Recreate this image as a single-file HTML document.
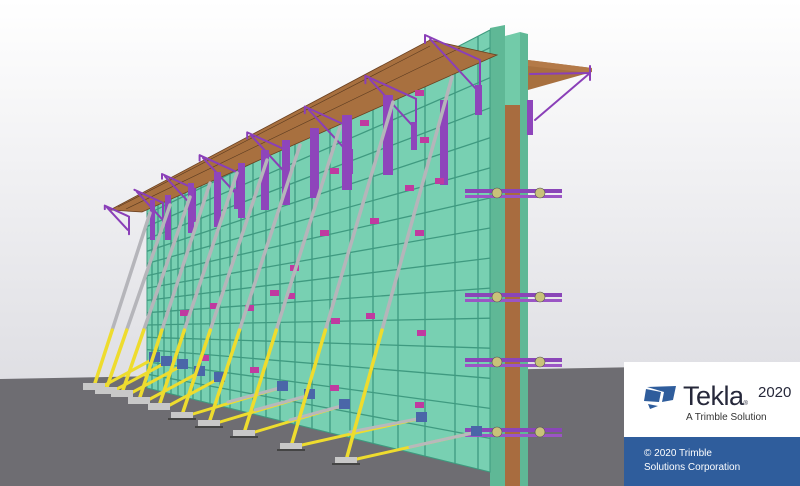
<!DOCTYPE html>
<html><head><meta charset="utf-8"><style>
body{margin:0;width:800px;height:486px;overflow:hidden;font-family:"Liberation Sans",sans-serif}
#c{position:absolute;left:0;top:0}
.box{position:absolute;left:624px;top:362px;width:176px;height:75px;background:#fff}
.blue{position:absolute;left:624px;top:437px;width:176px;height:49px;background:#2f5d9c;color:#fff;font-size:10px;line-height:14px;padding:10px 0 0 20px;box-sizing:border-box}
</style></head><body>
<svg id="c" width="800" height="486" viewBox="0 0 800 486">
<defs><linearGradient id="sky" x1="0" y1="0" x2="0" y2="1"><stop offset="0" stop-color="#ffffff"/><stop offset="1" stop-color="#d6d6dc"/></linearGradient></defs>
<rect width="800" height="486" fill="url(#sky)"/>
<polygon points="0,379 800,364 800,486 0,486" fill="#6e6d72"/>
<polygon points="505,36 520,32 520,486 505,486" fill="#72cba9"/>
<rect x="503" y="105" width="17" height="381" fill="#a86c3f"/>
<polygon points="520,32 528,34 528,486 520,486" fill="#5fb896"/>
<polygon points="490,28 505,25 505,486 490,486" fill="#5fb896"/>
<polygon points="147,207 490,30 490,472 147,388" fill="#78d0b2" stroke="#3d9a7e"/>
<g stroke="#3f9a80" stroke-width="1.3">
<line x1="478" y1="36.2" x2="478" y2="469"/><line x1="455" y1="48.1" x2="455" y2="463.5"/><line x1="425" y1="63.6" x2="425" y2="456.1"/><line x1="398" y1="77.5" x2="398" y2="449.5"/><line x1="373" y1="90.4" x2="373" y2="443.4"/><line x1="350" y1="102.2" x2="350" y2="437.7"/><line x1="330" y1="112.6" x2="330" y2="432.8"/><line x1="312" y1="121.9" x2="312" y2="428.4"/><line x1="295" y1="130.6" x2="295" y2="424.3"/><line x1="280" y1="138.4" x2="280" y2="420.6"/><line x1="266" y1="145.6" x2="266" y2="417.2"/><line x1="253" y1="152.3" x2="253" y2="414"/><line x1="241" y1="158.5" x2="241" y2="411"/><line x1="230" y1="164.2" x2="230" y2="408.3"/><line x1="220" y1="169.3" x2="220" y2="405.9"/><line x1="210" y1="174.5" x2="210" y2="403.4"/><line x1="201" y1="179.1" x2="201" y2="401.2"/><line x1="193" y1="183.3" x2="193" y2="399.3"/><line x1="185" y1="187.4" x2="185" y2="397.3"/><line x1="178" y1="191" x2="178" y2="395.6"/><line x1="171" y1="194.6" x2="171" y2="393.9"/><line x1="164" y1="198.2" x2="164" y2="392.2"/><line x1="158" y1="201.3" x2="158" y2="390.7"/><line x1="152" y1="204.4" x2="152" y2="389.2"/>
<line x1="147" y1="214.2" x2="490" y2="47.7"/><line x1="147" y1="226.5" x2="490" y2="77.7"/><line x1="147" y1="238.9" x2="490" y2="107.8"/><line x1="147" y1="251.2" x2="490" y2="137.8"/><line x1="147" y1="263.5" x2="490" y2="167.9"/><line x1="147" y1="275.8" x2="490" y2="198"/><line x1="147" y1="288.1" x2="490" y2="228"/><line x1="147" y1="300.4" x2="490" y2="258.1"/><line x1="147" y1="312.7" x2="490" y2="288.1"/><line x1="147" y1="325" x2="490" y2="318.2"/><line x1="147" y1="337.3" x2="490" y2="348.2"/><line x1="147" y1="349.6" x2="490" y2="378.3"/><line x1="147" y1="361.9" x2="490" y2="408.4"/><line x1="147" y1="374.2" x2="490" y2="438.4"/>
</g>
<polygon points="430,40 497,55 142,212 110,210" fill="#a8703f" stroke="#6a4020" stroke-width="0.8"/>
<line x1="430" y1="46" x2="118" y2="207" stroke="#5a3a20" stroke-width="0.6"/>
<line x1="460" y1="48" x2="126" y2="209" stroke="#5a3a20" stroke-width="0.6"/>
<polygon points="528,60 592,68 592,72 528,90" fill="#a8703f"/>
<polygon points="528,60 592,68 590,73 528,66" fill="#b47a48"/>
<g stroke="#8a3fb8" stroke-width="2" stroke-linecap="round" fill="none">
<path d="M425,35 L480,60 L480,100 M425,35 V43 M430,39 L477,90"/>
<path d="M365.4,75.8 L416,98.8 V135.6 M365.4,75.8 V83.2 M370,79.5 L413.2,126.4"/>
<path d="M304.8,106.6 L351,127.6 V161.2 M304.8,106.6 V113.3 M309,110 L348.5,152.8"/>
<path d="M247.2,132.4 L289,151.4 V181.8 M247.2,132.4 V138.5 M251,135.4 L286.7,174.2"/>
<path d="M199.6,155.2 L237,172.2 V199.4 M199.6,155.2 V160.6 M203,158 L235,192.6"/>
<path d="M162,174 L195,189 V213 M162,174 V178.8 M165,176.4 L193.2,207"/>
<path d="M134.4,189.8 L163,202.8 V223.6 M137,191.9 L161.4,218.4"/>
<path d="M104.8,205.6 L129,216.6 V234.2 M104.8,205.6 V209.1 M107,207.4 L127.7,229.8"/>
<path d="M530,74 L590,73 M590,73 L535,120 M590,66 V80"/>
</g>
<g fill="#8e45bb">
<rect x="475" y="85" width="7" height="30"/><rect x="411" y="122" width="6" height="28"/><rect x="347" y="149" width="6" height="25"/><rect x="285" y="170" width="5" height="23"/><rect x="234" y="189" width="5" height="20"/><rect x="192" y="204" width="4" height="18"/><rect x="527" y="100" width="6" height="35"/>
<rect x="440" y="100" width="8" height="85"/><rect x="383" y="95" width="10" height="80"/><rect x="342" y="115" width="10" height="75"/><rect x="310" y="128" width="9" height="70"/><rect x="282" y="140" width="8" height="65"/><rect x="261" y="150" width="8" height="60"/><rect x="238" y="163" width="7" height="55"/><rect x="214" y="172" width="7" height="55"/><rect x="188" y="183" width="6" height="50"/><rect x="165" y="195" width="6" height="45"/><rect x="150" y="200" width="5" height="40"/>
</g>
<g fill="#c03aa0">
<rect x="415" y="90" width="9" height="6"/><rect x="420" y="137" width="9" height="6"/><rect x="435" y="178" width="9" height="6"/><rect x="405" y="185" width="9" height="6"/><rect x="360" y="120" width="9" height="6"/><rect x="330" y="168" width="9" height="6"/><rect x="370" y="218" width="9" height="6"/><rect x="320" y="230" width="9" height="6"/><rect x="290" y="265" width="9" height="6"/><rect x="270" y="290" width="9" height="6"/><rect x="415" y="230" width="9" height="6"/><rect x="417" y="330" width="9" height="6"/><rect x="366" y="313" width="9" height="6"/><rect x="331" y="318" width="9" height="6"/><rect x="286" y="293" width="9" height="6"/><rect x="245" y="305" width="9" height="6"/><rect x="210" y="303" width="9" height="6"/><rect x="180" y="310" width="9" height="6"/><rect x="415" y="402" width="9" height="6"/><rect x="330" y="385" width="9" height="6"/><rect x="250" y="367" width="9" height="6"/><rect x="200" y="355" width="9" height="6"/>
</g>
<g>
<rect x="465" y="189" width="97" height="4" fill="#8a45b8"/><rect x="465" y="195" width="97" height="3" fill="#9b55c5"/>
<rect x="465" y="293" width="97" height="4" fill="#8a45b8"/><rect x="465" y="299" width="97" height="3" fill="#9b55c5"/>
<rect x="465" y="358" width="97" height="4" fill="#8a45b8"/><rect x="465" y="364" width="97" height="3" fill="#9b55c5"/>
<rect x="465" y="428" width="97" height="4" fill="#8a45b8"/><rect x="465" y="434" width="97" height="3" fill="#9b55c5"/>
<g fill="#c9c27a" stroke="#555" stroke-width=".6">
<circle cx="497" cy="193" r="5"/><circle cx="540" cy="193" r="5"/><circle cx="497" cy="297" r="5"/><circle cx="540" cy="297" r="5"/><circle cx="497" cy="362" r="5"/><circle cx="540" cy="362" r="5"/><circle cx="497" cy="432" r="5"/><circle cx="540" cy="432" r="5"/>
</g></g>
<g stroke-width="3" stroke-linecap="round">
<g stroke="#eedc2e">
<line x1="357" y1="459" x2="477" y2="432"/><line x1="302" y1="445" x2="422" y2="418"/><line x1="255" y1="432" x2="345" y2="405"/><line x1="220" y1="422" x2="310" y2="395"/><line x1="193" y1="414" x2="283" y2="387"/><line x1="170" y1="405" x2="220" y2="378"/><line x1="150" y1="399" x2="200" y2="372"/><line x1="133" y1="392" x2="183" y2="365"/><line x1="117" y1="389" x2="167" y2="362"/><line x1="105" y1="385" x2="155" y2="358"/>
</g>
<g stroke="#b8b8bc">
<line x1="410" y1="447" x2="477" y2="432"/><line x1="350" y1="432" x2="422" y2="418"/><line x1="290" y1="420" x2="345" y2="405"/><line x1="255" y1="410" x2="310" y2="395"/><line x1="228" y1="402" x2="283" y2="387"/>
</g></g>
<g fill="#4a66a8">
<rect x="471" y="426" width="11" height="10"/><rect x="416" y="412" width="11" height="10"/><rect x="339" y="399" width="11" height="10"/><rect x="304" y="389" width="11" height="10"/><rect x="277" y="381" width="11" height="10"/><rect x="214" y="372" width="11" height="10"/><rect x="194" y="366" width="11" height="10"/><rect x="177" y="359" width="11" height="10"/><rect x="161" y="356" width="11" height="10"/><rect x="149" y="352" width="11" height="10"/>
</g>
<g stroke-width="3.5" stroke-linecap="round">
<g stroke="#b5b5ba">
<line x1="452" y1="77" x2="382" y2="330"/><line x1="393" y1="102" x2="325.4" y2="330"/><line x1="340" y1="127" x2="276.3" y2="330"/><line x1="300" y1="145" x2="239.5" y2="330"/><line x1="267" y1="160" x2="210.3" y2="330"/><line x1="237" y1="173" x2="184.4" y2="330"/><line x1="210" y1="183" x2="161.9" y2="330"/><line x1="190" y1="197" x2="143.8" y2="330"/><line x1="170" y1="205" x2="126.7" y2="330"/><line x1="150" y1="213" x2="112.2" y2="330"/>
</g>
<g stroke="#eedc2e">
<line x1="382" y1="330" x2="347" y2="457"/><line x1="325.4" y1="330" x2="292" y2="443"/><line x1="276.3" y1="330" x2="245" y2="430"/><line x1="239.5" y1="330" x2="210" y2="420"/><line x1="210.3" y1="330" x2="183" y2="412"/><line x1="184.4" y1="330" x2="160" y2="403"/><line x1="161.9" y1="330" x2="140" y2="397"/><line x1="143.8" y1="330" x2="123" y2="390"/><line x1="126.7" y1="330" x2="107" y2="387"/><line x1="112.2" y1="330" x2="95" y2="383"/>
</g></g>
<g fill="#c8c8c8">
<rect x="335" y="457" width="22" height="7"/><rect x="280" y="443" width="22" height="7"/><rect x="233" y="430" width="22" height="7"/><rect x="198" y="420" width="22" height="7"/><rect x="171" y="412" width="22" height="7"/><rect x="148" y="403" width="22" height="7"/><rect x="128" y="397" width="22" height="7"/><rect x="111" y="390" width="22" height="7"/><rect x="95" y="387" width="22" height="7"/><rect x="83" y="383" width="22" height="7"/>
</g>
<g fill="#444">
<rect x="332" y="463" width="28" height="2"/><rect x="277" y="449" width="28" height="2"/><rect x="230" y="436" width="28" height="2"/><rect x="195" y="426" width="28" height="2"/><rect x="168" y="418" width="28" height="2"/>
</g>
</svg>
<div class="box">
<svg style="position:absolute;left:20px;top:22px" width="34" height="26" viewBox="0 0 34 26"><polygon points="3,3 32,2 29,16 18,18 20,8" fill="#2f5d9c"/><polygon points="2,5 17,8 15,18 0,17" fill="#2f5d9c"/><polygon points="4,20 14,22 6,25" fill="#2f5d9c"/></svg>
<div style="position:absolute;left:59px;top:19px;font-size:27px;color:#26283a;letter-spacing:-0.5px">Tekla<span style="font-size:6px">®</span></div>
<div style="position:absolute;left:134px;top:22px;font-size:15px;color:#26283a">2020</div>
<div style="position:absolute;left:62px;top:50px;font-size:10px;color:#333">A Trimble Solution</div>
</div>
<div class="blue">© 2020 Trimble<br>Solutions Corporation</div>
</body></html>
